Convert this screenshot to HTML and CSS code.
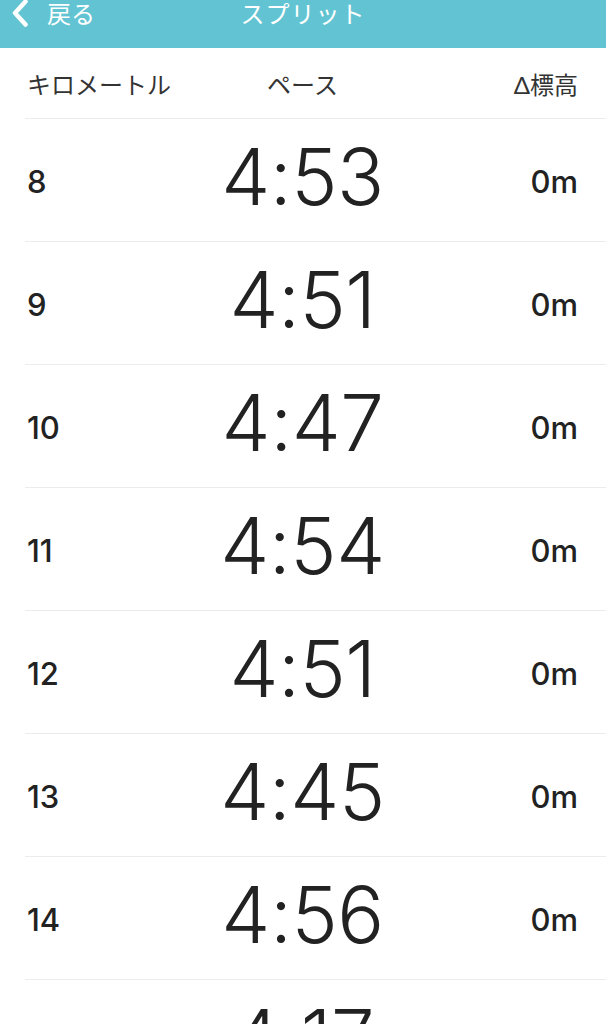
FILE: index.html
```html
<!DOCTYPE html>
<html lang="ja">
<head>
    <meta charset="UTF-8">
    <meta name="viewport" content="width=device-width, initial-scale=1.0">
    <title>スプリット</title>
    <link rel="stylesheet" href="styles.css">
</head>
<body>

<div class="topbar">
    <div class="back">
        <svg class="chevron" width="18" height="30" viewBox="0 0 18 30">
            <path d="M14.5 2.5 L4 14 L14.5 25.5" fill="none" stroke="#fff" stroke-width="4.5" stroke-linecap="round" stroke-linejoin="round"/>
        </svg>
        <span>戻る</span>
    </div>
    <div class="title">スプリット</div>
    <div></div>
</div>

<div class="splits">
    <div class="head">
        <span class="km">キロメートル</span>
        <span class="pace">ペース</span>
        <span class="elev">Δ標高</span>
    </div>

    <div class="row"><span class="km">8</span><span class="pace">4:53</span><span class="elev">0m</span></div>
    <div class="row"><span class="km">9</span><span class="pace">4:51</span><span class="elev">0m</span></div>
    <div class="row"><span class="km">10</span><span class="pace">4:47</span><span class="elev">0m</span></div>
    <div class="row"><span class="km">11</span><span class="pace">4:54</span><span class="elev">0m</span></div>
    <div class="row"><span class="km">12</span><span class="pace">4:51</span><span class="elev">0m</span></div>
    <div class="row"><span class="km">13</span><span class="pace">4:45</span><span class="elev">0m</span></div>
    <div class="row"><span class="km">14</span><span class="pace">4:56</span><span class="elev">0m</span></div>
    <div class="row"><span class="km">15</span><span class="pace">4:17</span><span class="elev">0m</span></div>
</div>

</body>
</html>
```

FILE: styles.css
```css
body {
    margin: 0;
    font-family: Lato, "Noto Sans CJK JP", sans-serif;
    color: #222;
    background: #fff;
}
.topbar {
    height: 48px;
    background-color: #62c4d3;
    color: #fff;
    display: grid;
    grid-template-columns: 1fr auto 1fr;
    align-items: start;
    font-size: 24px;
    line-height: 28px;
}
.back {
    display: flex;
    align-items: flex-start;
    padding-left: 11px;
    gap: 18px;
}
.chevron {
    margin-top: -1px;
}
.title {
    letter-spacing: 1px;
}
.splits {
    margin-left: 25px;
    overflow: hidden;
}
.head, .row {
    display: grid;
    grid-template-columns: 1fr auto 1fr;
    align-items: center;
    padding: 0 28px 0 2px;
    border-bottom: 1px solid #ececec;
}
.head {
    height: 70px;
    font-size: 24px;
    color: #333;
}
.row {
    height: 122px;
}
.km {
    justify-self: start;
}
.elev {
    justify-self: end;
}
.row .km, .row .elev {
    font-family: Inter, "Noto Sans", sans-serif;
    font-weight: 500;
    font-size: 31px;
    margin-top: 3px;
}
.row .pace {
    font-family: Inter, "Noto Sans", sans-serif;
    font-size: 78px;
    font-weight: 330;
    letter-spacing: -0.5px;
    line-height: 1;
    margin-top: -6px;
}
```
